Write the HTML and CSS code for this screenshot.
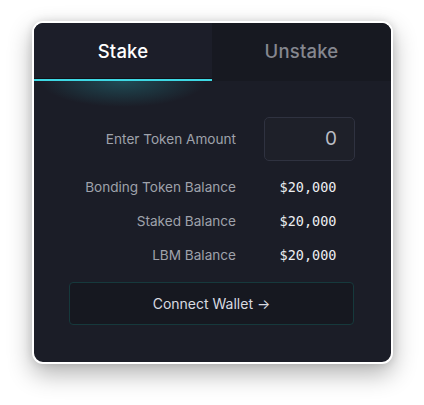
FILE: index.html
```html
<!DOCTYPE html>
<html>
<head>
<meta charset="utf-8">
<link rel="stylesheet" href="styles.css">
</head>
<body>
<div class="card">
  <div class="tabs">
    <div class="tab active">Stake</div>
    <div class="tab">Unstake</div>
  </div>
  <div class="content">
    <div class="grid">
      <div class="label first">Enter Token Amount</div>
      <div class="input">0</div>
      <div class="label">Bonding Token Balance</div>
      <div class="value">$20,000</div>
      <div class="label">Staked Balance</div>
      <div class="value">$20,000</div>
      <div class="label">LBM Balance</div>
      <div class="value">$20,000</div>
    </div>
    <button class="connect">Connect Wallet →</button>
  </div>
</div>
</body>
</html>
```

FILE: styles.css
```css
html, body {
  margin: 0;
  padding: 0;
  background: #ffffff;
}
body {
  padding: 21px 0 40px 32px;
  font-family: Inter, "Noto Sans", sans-serif;
}
.card {
  width: 357px;
  border: 2px solid #ffffff;
  border-radius: 11px;
  background: #1b1d27;
  overflow: hidden;
  box-shadow: 0 10px 24px rgba(0, 0, 0, 0.3), 0 0 8px rgba(0, 0, 0, 0.12);
}
.tabs {
  display: grid;
  grid-template-columns: 178px 1fr;
  height: 58px;
}
.tab {
  display: flex;
  align-items: center;
  justify-content: center;
  font-size: 18.5px;
  font-weight: 500;
  letter-spacing: 0.2px;
  color: #85878f;
  background: #171921;
  padding-bottom: 2px;
}
.tab.active {
  color: #ffffff;
  background: #1c1e29;
  box-shadow: inset 0 -2px 0 #3ed8e4, inset 0 -3px 0 #101117;
  position: relative;
}
.tab.active::after {
  content: "";
  position: absolute;
  left: 6px;
  right: 6px;
  top: 58px;
  height: 26px;
  background: radial-gradient(ellipse 50% 100% at 50% 0%, rgba(35, 130, 140, 0.45), rgba(35, 130, 140, 0) 100%);
}
.content {
  padding: 36px 36px 37px 35px;
}
.grid {
  display: grid;
  grid-template-columns: 167px 91px;
  grid-template-rows: 53px 34px 34px 34px;
  column-gap: 28px;
  align-items: center;
}
.label {
  text-align: right;
  font-size: 13.6px;
  color: #9fa2ab;
  white-space: nowrap;
}
.label.first {
  align-self: start;
  line-height: 44px;
}
.input {
  align-self: start;
  height: 42px;
  border: 1px solid #2f3240;
  border-radius: 5px;
  background: #1e2029;
  color: #b9bcc4;
  font-size: 19px;
  text-align: right;
  padding-right: 17px;
  line-height: 42px;
}
.value {
  text-align: center;
  font-family: "DejaVu Sans Mono", "Liberation Mono", monospace;
  font-size: 13.5px;
  color: #eceef1;
  padding-right: 3px;
}
.connect {
  display: block;
  width: 285px;
  height: 43px;
  margin-top: 10px;
  border: 1px solid #16393c;
  border-radius: 4px;
  background: #161820;
  color: #d9dbe0;
  font-family: Inter, "Noto Sans", sans-serif;
  font-size: 14px;
}
```
